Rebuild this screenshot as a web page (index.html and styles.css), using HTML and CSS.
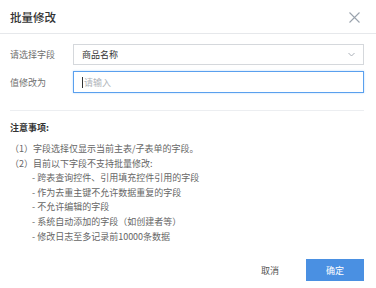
FILE: index.html
```html
<!DOCTYPE html>
<html lang="zh-CN">
<head>
    <meta charset="UTF-8">
    <meta name="viewport" content="width=device-width, initial-scale=1.0">
    <title>批量修改</title>
    <link rel="stylesheet" href="styles.css">
</head>
<body>
    <div class="dialog">
        <header class="dialog-header">
            <h1>批量修改</h1>
            <span class="close">
                <svg width="11" height="11" viewBox="0 0 11 11">
                    <path d="M0.5 0.5 L10.5 10.5 M10.5 0.5 L0.5 10.5" stroke="#9aa3ad" stroke-width="1.1" fill="none"/>
                </svg>
            </span>
        </header>
        <main class="dialog-body">
            <div class="form-row">
                <label>请选择字段</label>
                <div class="field select">
                    <span>商品名称</span>
                    <svg width="7" height="5" viewBox="0 0 7 5">
                        <path d="M0.5 1 L3.5 4 L6.5 1" stroke="#a0a7b0" stroke-width="0.9" fill="none"/>
                    </svg>
                </div>
            </div>
            <div class="form-row">
                <label>值修改为</label>
                <div class="field input">
                    <span class="cursor"></span>
                    <span class="placeholder">请输入</span>
                </div>
            </div>
            <div class="notes">
                <h2>注意事项:</h2>
                <div class="note"><span class="num">（1）</span>字段选择仅显示当前主表/子表单的字段。</div>
                <div class="note"><span class="num">（2）</span>目前以下字段不支持批量修改:</div>
                <div class="sub">- 跨表查询控件、引用填充控件引用的字段</div>
                <div class="sub">- 作为去重主键不允许数据重复的字段</div>
                <div class="sub">- 不允许编辑的字段</div>
                <div class="sub">- 系统自动添加的字段（如创建者等）</div>
                <div class="sub">- 修改日志至多记录前10000条数据</div>
            </div>
        </main>
        <footer class="dialog-footer">
            <button class="btn-cancel">取消</button>
            <button class="btn-ok">确定</button>
        </footer>
    </div>
</body>
</html>
```

FILE: styles.css
```css
html, body {
    margin: 0;
    padding: 0;
    width: 100%;
    height: 100%;
}
body {
    font-family: "Noto Sans CJK SC", "Noto Sans", sans-serif;
    background-color: #FFFFFF;
    color: #333;
}
.dialog {
    width: 376px;
    height: 288px;
    display: flex;
    flex-direction: column;
}
.dialog-header {
    height: 33px;
    border-bottom: 1px solid #e6e8eb;
    display: flex;
    align-items: center;
    justify-content: space-between;
    padding: 0 16px 0 10px;
}
.dialog-header h1 {
    margin: 0;
    font-size: 11.5px;
    font-weight: 500;
    color: #333;
}
.close {
    display: flex;
    margin-top: 2px;
}
.dialog-body {
    padding: 10px 12px 0 10px;
}
.form-row {
    display: flex;
    align-items: center;
    margin-bottom: 6px;
}
.form-row label {
    width: 63px;
    font-size: 9px;
    color: #707070;
}
.field {
    flex: 1;
    height: 22px;
    box-sizing: border-box;
    display: flex;
    align-items: center;
    padding: 0 8px;
    font-size: 9px;
}
.select {
    border: 1px solid #d5d8dc;
    justify-content: space-between;
    color: #333;
    height: 21px;
}
.input {
    border: 1px solid #5aa0ee;
    box-shadow: 0 0 2px #bcd8fa;
}
.cursor {
    width: 1px;
    height: 11px;
    background-color: #333;
    margin-right: 1px;
}
.placeholder {
    color: #b0b4ba;
}
.notes {
    margin-top: 17px;
    border-top: 1px solid #eceef1;
    padding-top: 10px;
}
.notes h2 {
    margin: 0 0 7px 0;
    font-size: 9px;
    font-weight: bold;
    color: #333;
    line-height: 14px;
}
.note, .sub {
    font-size: 9px;
    color: #666;
    line-height: 14.6px;
}
.sub {
    padding-left: 22px;
}
.dialog-footer {
    margin-top: auto;
    padding: 0 12px 7px 0;
    display: flex;
    justify-content: flex-end;
    align-items: center;
}
.dialog-footer button {
    font-family: inherit;
    font-size: 9px;
    border: none;
    cursor: pointer;
}
.btn-cancel {
    background: none;
    color: #555;
    margin-right: 21px;
}
.btn-ok {
    width: 58px;
    height: 22px;
    background-color: #4a90e2;
    color: white;
}
```
